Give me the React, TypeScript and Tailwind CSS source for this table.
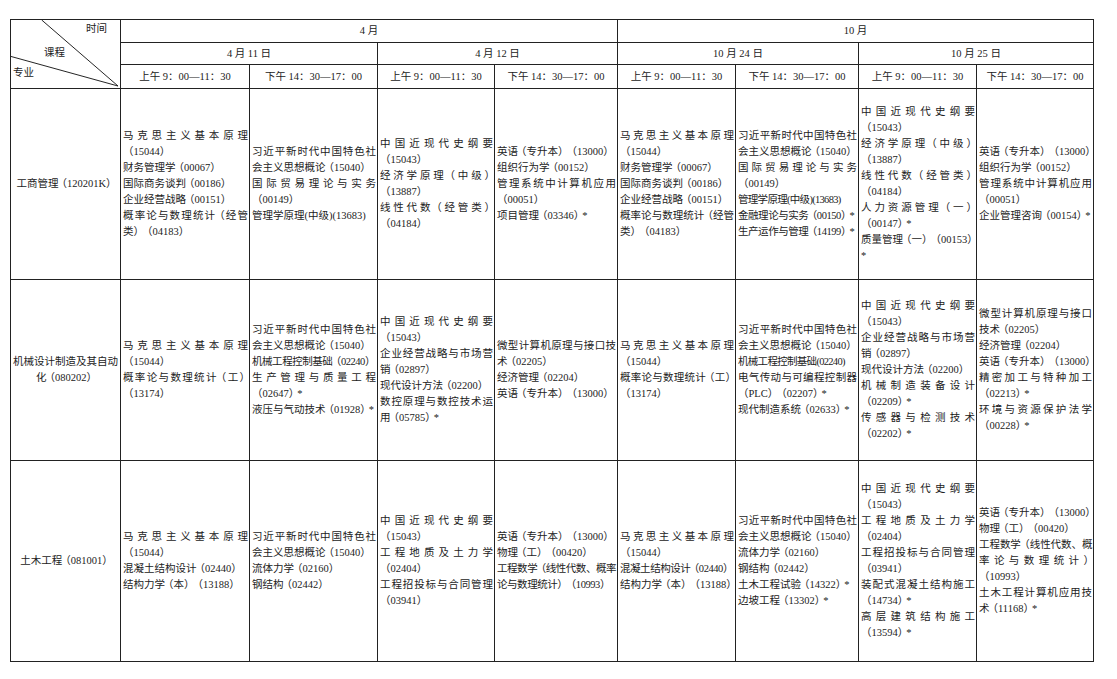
import clsx from "clsx";

type Para = string[];
type Cell = Para[];

// "!" at the start of a line squeezes it a little so it fits its column, "!!" a bit more
const ROWS: { major: string[]; cells: Cell[] }[] = [
  {
    major: ["工商管理（120201K）"],
    cells: [
      [["马克思主义基本原理", "（15044）"], ["财务管理学（00067）"], ["国际商务谈判（00186）"], ["企业经营战略（00151）"], ["概率论与数理统计（经管", "类）（04183）"]],
      [["习近平新时代中国特色社", "会主义思想概论（15040）"], ["国际贸易理论与实务", "（00149）"], ["管理学原理(中级)(13683)"]],
      [["中国近现代史纲要", "（15043）"], ["经济学原理（中级）", "（13887）"], ["线性代数（经管类）", "（04184）"]],
      [["英语（专升本）（13000）"], ["组织行为学（00152）"], ["管理系统中计算机应用", "（00051）"], ["项目管理（03346）*"]],
      [["马克思主义基本原理", "（15044）"], ["财务管理学（00067）"], ["国际商务谈判（00186）"], ["企业经营战略（00151）"], ["概率论与数理统计（经管", "类）（04183）"]],
      [["习近平新时代中国特色社", "会主义思想概论（15040）"], ["国际贸易理论与实务", "（00149）"], ["!!管理学原理(中级)(13683)"], ["!金融理论与实务（00150）*"], ["!生产运作与管理（14199）*"]],
      [["中国近现代史纲要", "（15043）"], ["经济学原理（中级）", "（13887）"], ["线性代数（经管类）", "（04184）"], ["人力资源管理（一）", "（00147）*"], ["质量管理（一）（00153）", "*"]],
      [["英语（专升本）（13000）"], ["组织行为学（00152）"], ["管理系统中计算机应用", "（00051）"], ["企业管理咨询（00154）*"]],
    ],
  },
  {
    major: ["机械设计制造及其自动", "化（080202）"],
    cells: [
      [["马克思主义基本原理", "（15044）"], ["概率论与数理统计（工）", "（13174）"]],
      [["习近平新时代中国特色社", "会主义思想概论（15040）"], ["!机械工程控制基础（02240）"], ["生产管理与质量工程", "（02647）*"], ["液压与气动技术（01928）*"]],
      [["中国近现代史纲要", "（15043）"], ["企业经营战略与市场营", "销（02897）"], ["现代设计方法（02200）"], ["数控原理与数控技术运", "用（05785）*"]],
      [["微型计算机原理与接口技", "术（02205）"], ["经济管理（02204）"], ["英语（专升本）（13000）"]],
      [["马克思主义基本原理", "（15044）"], ["概率论与数理统计（工）", "（13174）"]],
      [["习近平新时代中国特色社", "会主义思想概论（15040）"], ["!!机械工程控制基础(02240)"], ["电气传动与可编程控制器", "（PLC）（02207）*"], ["现代制造系统（02633）*"]],
      [["中国近现代史纲要", "（15043）"], ["企业经营战略与市场营", "销（02897）"], ["现代设计方法（02200）"], ["机械制造装备设计", "（02209）*"], ["传感器与检测技术", "（02202）*"]],
      [["微型计算机原理与接口", "技术（02205）"], ["经济管理（02204）"], ["英语（专升本）（13000）"], ["精密加工与特种加工", "（02213）*"], ["环境与资源保护法学", "（00228）*"]],
    ],
  },
  {
    major: ["土木工程（081001）"],
    cells: [
      [["马克思主义基本原理", "（15044）"], ["混凝土结构设计（02440）"], ["结构力学（本）（13188）"]],
      [["习近平新时代中国特色社", "会主义思想概论（15040）"], ["流体力学（02160）"], ["钢结构（02442）"]],
      [["中国近现代史纲要", "（15043）"], ["工程地质及土力学", "（02404）"], ["工程招投标与合同管理", "（03941）"]],
      [["英语（专升本）（13000）"], ["物理（工）（00420）"], ["!工程数学（线性代数、概率", "!论与数理统计）（10993）"]],
      [["马克思主义基本原理", "（15044）"], ["!混凝土结构设计（02440）"], ["结构力学（本）（13188）"]],
      [["习近平新时代中国特色社", "会主义思想概论（15040）"], ["流体力学（02160）"], ["钢结构（02442）"], ["土木工程试验（14322）*"], ["边坡工程（13302）*"]],
      [["中国近现代史纲要", "（15043）"], ["工程地质及土力学", "（02404）"], ["工程招投标与合同管理", "（03941）"], ["装配式混凝土结构施工", "（14734）*"], ["高层建筑结构施工", "（13594）*"]],
      [["英语（专升本）（13000）"], ["物理（工）（00420）"], ["!工程数学（线性代数、概", "率论与数理统计）", "（10993）"], ["土木工程计算机应用技", "术（11168）*"]],
    ],
  },
];

const ROW_HEIGHTS = ["h-[191px]", "h-[181px]", "h-[201px]"];
const TIMES = ["上午 9：00—11：30", "下午 14：30—17：00"];

// full-width brackets are a bit loose in Noto: trim the blank side of each
// (the char before "（", and "）" itself) via a narrower advance
function chars(s: string) {
  const list = Array.from(s);
  const out: React.ReactNode[] = [];
  let buf = "";
  list.forEach((ch, i) => {
    const squeeze = ch === "）" || list[i + 1] === "（";
    if (squeeze) {
      if (buf) out.push(buf);
      buf = "";
      out.push(
        <span key={i} className="tracking-[-2px]">
          {ch}
        </span>
      );
    } else {
      buf += ch;
    }
  });
  if (buf) out.push(buf);
  return out;
}

function Line({ text, last }: { text: string; last: boolean }) {
  const squeeze = text.startsWith("!!") ? 2 : text.startsWith("!") ? 1 : 0;
  const s = text.slice(squeeze);
  return (
    <div
      className={clsx(
        "whitespace-nowrap",
        last ? "text-left" : "text-justify [text-align-last:justify]",
        squeeze === 1 && "tracking-[-0.45px]",
        squeeze === 2 && "tracking-[-0.7px]"
      )}
    >
      {chars(s)}
    </div>
  );
}

function CourseCell({ cell }: { cell: Cell }) {
  return (
    <td className="border border-[#222] pl-[2px] pr-[1px] align-middle">
      {cell.map((para, i) => (
        <div key={i}>
          {para.map((line, j) => (
            <Line key={j} text={line} last={j === para.length - 1} />
          ))}
        </div>
      ))}
    </td>
  );
}

export default function App() {
  return (
    <div className="min-h-screen bg-white pl-[10px] pt-[19px] font-['Liberation_Serif','Noto_Sans_CJK_SC',serif] text-[10.5px] leading-[16px] text-[#222] [text-spacing-trim:space-all]">
      <table className="w-[1083px] table-fixed border-collapse border border-[#222]">
        <colgroup>
          <col className="w-[110px]" />
          <col className="w-[129px]" />
          <col className="w-[128px]" />
          <col className="w-[117px]" />
          <col className="w-[123px]" />
          <col className="w-[118px]" />
          <col className="w-[123px]" />
          <col className="w-[118px]" />
          <col className="w-[117px]" />
        </colgroup>
        <thead>
          <tr className="h-[23px]">
            {/* Diagonal corner cell */}
            <th rowSpan={3} className="relative border border-[#222] p-0 align-top font-normal">
              <svg className="absolute inset-0 h-full w-full" viewBox="0 0 110 69" preserveAspectRatio="none">
                <line x1="31" y1="0" x2="108" y2="67" stroke="#222" strokeWidth="1" />
                <line x1="0" y1="37" x2="108" y2="67" stroke="#222" strokeWidth="1" />
              </svg>
              <div className="flex flex-col text-left">
                <span className="mt-[1px] pl-[75px]">时间</span>
                <span className="mt-[8px] pl-[33px]">课程</span>
                <span className="mt-[4px] pl-[2px]">专业</span>
              </div>
            </th>
            <th colSpan={4} className="border border-[#222] font-normal">4 月</th>
            <th colSpan={4} className="border border-[#222] font-normal">10 月</th>
          </tr>
          <tr className="h-[22px]">
            {["4 月 11 日", "4 月 12 日", "10 月 24 日", "10 月 25 日"].map((d) => (
              <th key={d} colSpan={2} className="border border-[#222] font-normal">
                {d}
              </th>
            ))}
          </tr>
          <tr className="h-[24px]">
            {[0, 1, 2, 3].map((k) =>
              TIMES.map((t) => (
                <th key={k + t} className="border border-[#222] font-normal whitespace-nowrap">
                  {t}
                </th>
              ))
            )}
          </tr>
        </thead>
        <tbody>
          {ROWS.map((row, r) => (
            <tr key={r} className={ROW_HEIGHTS[r]}>
              <td className="border border-[#222] px-[2px] text-center align-middle">
                {row.major.map((l) => (
                  <div key={l} className="whitespace-nowrap">{chars(l)}</div>
                ))}
              </td>
              {row.cells.map((cell, c) => (
                <CourseCell key={c} cell={cell} />
              ))}
            </tr>
          ))}
        </tbody>
      </table>
    </div>
  );
}
